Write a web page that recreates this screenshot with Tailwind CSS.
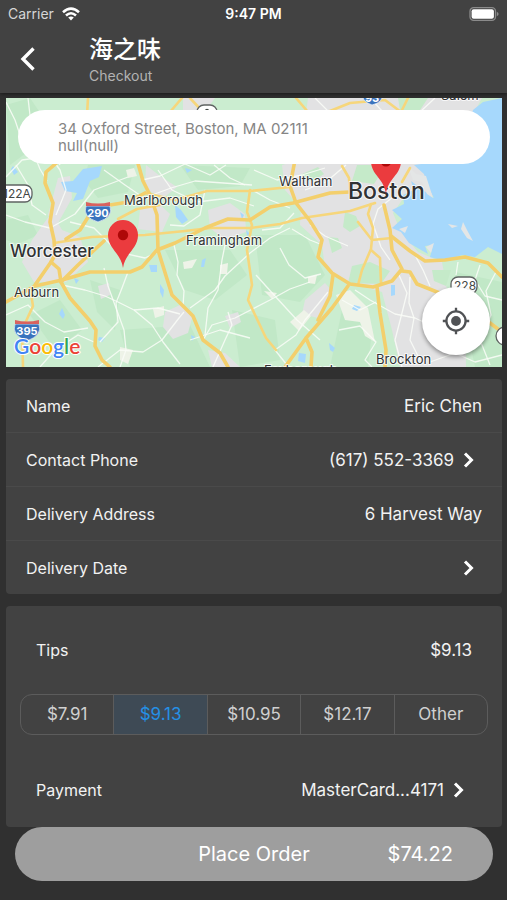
<!DOCTYPE html>
<html lang="en">
<head>
<meta charset="utf-8">
<meta name="viewport" content="width=device-width, initial-scale=1">
<title>Checkout</title>
<script src="https://cdn.jsdelivr.net/npm/@tailwindcss/browser@4"></script>
</head>
<body class="min-h-screen bg-[#303030] font-['Inter','Noto_Sans_CJK_SC',sans-serif] text-[#f2f2f2]">

<header class="bg-[#424242] shadow-[0_1px_4px_rgba(0,0,0,0.5)]">
  <div class="grid grid-cols-3 items-center px-2 pt-1 text-sm">
    <div class="flex items-center gap-2 leading-5 text-[#d6d6d6]">
      <span>Carrier</span>
      <svg class="h-[14px] w-[18px]" viewBox="0 0 18 14" fill="none" stroke="#fff" stroke-width="2.6" aria-label="Wi-Fi">
        <path d="M1 5.2Q9-2 17 5.2"/><path d="M4 8.5Q9 4 14 8.5"/><path d="M6.2 10.6Q9 8.2 11.8 10.6L9 13.6Z" fill="#fff" stroke="none"/>
      </svg>
    </div>
    <div class="text-center font-semibold leading-5 text-white">9:47 PM</div>
    <svg class="h-[14px] w-[30px] justify-self-end" viewBox="0 0 30 14" aria-label="Battery full">
      <rect x="1" y="0.7" width="25.5" height="12.6" rx="3.6" fill="none" stroke="#8b8b8b" stroke-width="1.3"/>
      <rect x="2.6" y="2.3" width="22.3" height="9.4" rx="2" fill="#fff"/>
      <path d="M27.8 4.8Q29.6 5.6 29.6 7T27.8 9.2Z" fill="#8b8b8b"/>
    </svg>
  </div>
  <div class="flex items-center gap-[49px] px-4 pt-2 pb-2">
    <button class="flex h-8 w-6 items-center justify-center" aria-label="Back">
      <svg class="h-6 w-4" viewBox="0 0 16 24" fill="none" stroke="#fff" stroke-width="3.4"><path d="M13.5 1.5L3 12L13.5 22.5"/></svg>
    </button>
    <div>
      <h1 class="pt-px text-2xl leading-[34px] font-medium text-white">海之味</h1>
      <p class="text-sm leading-[18px] text-[#b3b3b3]">Checkout</p>
    </div>
  </div>
</header>

<main class="flex flex-col gap-3 pt-[5px] pr-[5px] pl-[6px]">
  <section class="relative overflow-hidden" aria-label="Delivery map">
    <svg class="block w-full" viewBox="6 98 496 269" font-family="Inter, sans-serif">
      <rect x="6" y="98" width="496" height="269" fill="#cbedd0"/>
      <!-- woodland shading -->
      <g fill="#c1e8c7">
        <path d="M6 105L30 98L45 120L30 150L10 165Z"/><path d="M88 165L135 165L128 192L98 198L84 180Z"/><path d="M180 165L250 168L240 186L198 190Z"/>
        <path d="M165 250L230 250L247 275L215 300L185 290Z"/><path d="M90 280L120 290L115 330L97 312Z"/><path d="M120 330L190 325L210 367L130 367Z"/>
        <path d="M255 235L305 235L325 275L300 302L262 295Z"/><path d="M232 310L275 320L280 360L240 367Z"/><path d="M342 310L372 330L368 367L330 367Z"/><path d="M455 272L502 282L502 367L475 367Z"/>
        <path d="M6 220L28 215L38 235L18 244L6 240Z"/><path d="M30 315L60 300L82 330L55 350Z"/>
      </g>
      <!-- built-up areas -->
      <g fill="#e2e2e3">
        <path d="M308 98L482 98L470 120L440 165L430 178L436 197L420 190L405 196L393 213L400 230L418 252L442 262L447 290L465 312L466 367L400 367L392 330L382 292L352 284L325 268L322 245L300 225L301 208L285 190L282 165L300 160Z"/>
        <path d="M32 240L52 212L62 230L80 237L88 262L66 282L34 282L22 262Z"/><path d="M146 165L160 176L177 187L162 199L145 188Z"/>
        <path d="M140 210L158 203L170 214L162 232L138 229Z"/><path d="M165 312L182 304L192 318L188 333L173 339L163 327Z"/>
        <path d="M208 210L230 203L245 214L246 232L225 240L210 228Z"/><path d="M305 300L325 283L333 292L318 318L302 314Z"/><path d="M48 215L58 178L70 176L72 198L57 225Z"/>
        <path d="M183 98L215 98L205 112L183 111Z"/><path d="M98 286L109 283L110 295L101 299Z"/><path d="M225 316L238 312L241 322L230 328Z"/><path d="M208 350L225 353L240 367L212 367Z"/>
      </g>
      <g fill="#eef3e8">
        <path d="M336 295L350 290L368 308L375 342L365 336L360 322L345 320Z"/><path d="M290 322L304 310L311 316L299 331Z"/><path d="M120 347L133 350L128 364L120 360Z"/><path d="M126 170L134 168L137 176L128 178Z"/><path d="M153 309L164 306L164 315L155 318Z"/>
        <path d="M183 262L197 259L192 268L184 269Z"/><path d="M220 265L228 263L227 274L220 274Z"/><path d="M308 277L317 275L315 284L308 283Z"/><path d="M264 291L277 293L272 299Z"/>
      </g>
      <g fill="#c5eac9">
        <path d="M352 266L370 262L390 271L381 284L348 283Z"/><path d="M357 165L386 165L374 184L352 181Z"/><path d="M345 212L356 216L360 226L350 232L343 227Z"/>
        <path d="M328 237L338 238L342 248L332 253Z"/><path d="M398 98L428 98L420 110L400 110Z"/><path d="M300 175L318 167L324 174L312 182Z"/><path d="M432 270L451 270L446 286L434 281Z"/>
      </g>
      <!-- ocean and lakes -->
      <g fill="#a6d8fc">
        <path d="M502 98L483 102L473 110L468 130L450 160L414 165L424 174L426 183L434 198L420 188L411 181L414 190L403 195L404 204L392 210L402 219L392 228L401 232L409 243L428 254L425 246L433 245L430 257L444 261L462 255L475 257L488 247L502 254Z"/>
        <path d="M102 166L99 177L90 181L83 199L73 201L77 193L65 191L61 182L73 181L83 169Z"/><path d="M13 166L18 172L14 175L11 169Z"/>
        <path d="M175 205L181 210L188 220L182 224L176 217Z"/><path d="M202 260L206 258L204 267L201 267Z"/><path d="M149 265L157 265L157 272L151 272Z"/><path d="M160 284L164 290L163 298L160 292Z"/>
        <path d="M62 308L65 315L63 319L59 314Z"/><path d="M99 337L105 338L102 342L98 340Z"/><path d="M391 285L395 285L395 295L391 296Z"/><path d="M354 305L361 307L357 311L352 309Z"/><path d="M329 343L335 348L333 352L330 350Z"/>
        <path d="M299 353L306 354L305 363L298 361Z"/><path d="M74 278L79 280L76 284Z"/><path d="M185 168L192 170L187 173Z"/><path d="M191 335L195 337L192 341Z"/><path d="M240 212L244 215L242 219Z"/><path d="M246 230L250 234L247 236Z"/>
      </g>
      <g fill="#e4e6e6">
        <path d="M408 166L416 174L426 176L433 198L427 194L422 182L413 180Z"/><path d="M463 222L467 230L473 241L467 238L461 229Z"/><path d="M448 224L458 226L452 228Z"/><path d="M399 229L408 226L405 233Z"/><path d="M426 247L434 243L431 253Z"/>
      </g>
      <!-- local roads -->
      <g fill="none" stroke="#fafdf8" stroke-opacity="0.85" stroke-width="1.3" stroke-linejoin="round">
        <path d="M6 102L15 120L20 135L33 152L40 169L47 181"/><path d="M6 177L22 160L50 156L60 170L66 190L56 215"/><path d="M28 98L31 124L52 150L60 165"/><path d="M16 165L28 185L32 205L46 215"/>
        <path d="M6 215L25 222L50 228L75 214L94 190L128 177"/><path d="M70 222L94 228L118 252L145 258L158 252"/><path d="M104 170L125 185L144 198L171 188L195 181L252 185"/><path d="M158 170L172 190L197 202L230 198L254 206"/>
        <path d="M142 180L160 176L185 164L210 175L226 165"/><path d="M205 190L200 215L184 226L170 225"/><path d="M214 165L230 178L245 185"/>
        <path d="M62 285L85 290L105 296L118 302L134 310L152 325L163 342L180 364"/><path d="M104 268L108 286L124 330L126 350L120 367"/><path d="M128 272L122 288L116 303L118 322L100 342"/>
        <path d="M6 315L28 305L45 322L64 332L88 328"/><path d="M40 367L55 350L78 335L94 342"/><path d="M98 367L120 350L143 352L162 340L179 318L184 312"/><path d="M134 310L158 308L180 314"/>
        <path d="M174 245L178 262L177 275L184 291L183 306"/><path d="M203 340L212 325L235 318L270 300L290 289L310 282"/><path d="M190 308L215 290L225 276L250 253L270 238L290 228"/><path d="M205 335L208 308L218 290L222 260L226 240"/>
        <path d="M190 340L220 330L250 338"/><path d="M213 367L225 340L232 325L228 312"/>
        <path d="M256 275L274 295L297 320L320 340"/><path d="M287 365L275 350L296 335L305 320L328 292"/><path d="M280 248L289 265L305 278L321 274"/>
        <path d="M252 190L270 200L290 208"/><path d="M292 229L310 240L320 244"/><path d="M294 213L280 228L262 230"/>
        <path d="M254 170L277 180L302 175L325 168"/><path d="M305 190L326 182L346 165"/><path d="M310 225L325 236L348 246"/>
        <path d="M393 197L378 209L373 224L381 247L390 260"/><path d="M355 290L370 300L395 314L415 318L430 325"/>
        <path d="M399 275L407 293L402 313L395 340L402 367"/><path d="M410 277L409 303L414 318L410 340L420 360"/>
        <path d="M342 300L360 310L376 302"/><path d="M339 330L360 326L376 342L365 360L372 367"/><path d="M416 257L423 270L430 286"/><path d="M458 262L456 275"/>
        <path d="M480 265L475 280L485 296L502 300"/><path d="M496 272L486 291L491 315L480 340L490 365"/><path d="M430 362L455 353L475 362L502 355"/><path d="M315 98L329 112"/><path d="M370 98L383 112"/><path d="M420 112L435 98"/>
      </g>
      <!-- highways -->
      <g fill="none" stroke-linejoin="round" stroke-linecap="round">
        <g stroke="#f6d67b" stroke-width="2.6">
          <path d="M54 243L92 237L145 235L185 231L210 228L250 228L280 224L302 218L350 211L375 203"/><path d="M30 288L33 306L22 330L23 367"/><path d="M145 193L175 200L207 191L250 191L290 187"/>
          <path d="M118 219L137 209L160 205"/><path d="M88 98L87 115M182 98L170 112M190 98L203 112M296 98L308 112M330 111L350 103L385 100L401 112L408 98"/>
          <path d="M371 204L368 214L373 228L371 249L362 270L358 285M371 250L380 258L381 284M358 222L372 240L392 238"/><path d="M250 190L247 212L252 225L247 250L252 285L248 300L266 338L276 350"/><path d="M402 182L410 168M342 166L349 178L350 193"/>
        </g>
        <g stroke="#f3cf6c" stroke-width="3.6">
          <path d="M60 160L46 172L45 183L53 203L50 222L54 240L55 255L51 262L35 285"/><path d="M51 262L59 269L61 282L70 298L90 321L96 330L95 346L102 360L110 367"/>
          <path d="M6 302L35 286L62 280L90 272L130 272L142 267L157 250L175 243L205 228L228 219L250 220L270 207L293 203L330 193L350 192"/>
          <path d="M61 282L78 265L104 241M66 239L80 230L90 214L110 205L128 202L145 193"/><path d="M137 160L143 181L150 195L157 215L158 250L172 295L193 316L203 340L220 353L228 367"/>
          <path d="M295 160L290 186L296 203L310 221L322 240L318 257L332 273L350 284L373 287L392 281L402 269L392 250L390 230L384 205"/>
          <path d="M348 286L332 308L306 338L285 367M306 338L312 352L311 367"/><path d="M333 275L330 296L318 320"/><path d="M377 287L380 313L386 350L385 367"/>
          <path d="M402 271L410 272L417 284L437 292L467 305L490 323L502 332"/><path d="M391 236L410 251L425 261L445 260L465 257L488 263L502 277"/>
        </g>
      </g>
      <!-- route shields -->
      <g stroke="#5f6362" stroke-width="1.3" fill="#fff">
        <rect x="-5" y="185" width="37" height="17" rx="7"/><rect x="197" y="105" width="20" height="16" rx="7"/><rect x="451" y="277" width="26" height="17" rx="7"/><circle cx="505" cy="336" r="9"/>
      </g>
      <g fill="#434846" font-size="12"><text x="3" y="198">122A</text><text x="454" y="290">228</text></g>
      <path d="M205 111Q207 108 209 111" fill="none" stroke="#434846" stroke-width="1.4"/>
      <g fill="#3973bd" stroke="#f1f4fa" stroke-width="0.7">
        <path d="M86 206H110Q114 217 98 222Q82 217 86 206Z"/><path d="M15 324H39Q43 335 27 341Q11 335 15 324Z"/><path d="M363 94H382Q384 102 372 105Q361 101 363 94Z"/>
      </g>
      <g fill="#d9625f"><path d="M86 202Q98 205 110 202L110 206H86Z"/><path d="M15 320Q27 323 39 320L39 324H15Z"/></g>
      <g fill="#fff" font-size="11" font-weight="700" text-anchor="middle"><text x="98" y="217">290</text><text x="27" y="335">395</text><text x="372" y="102">93</text></g>
      <!-- place names -->
      <g fill="#303234" stroke="#fff" stroke-width="2" stroke-opacity="0.75" paint-order="stroke" stroke-linejoin="round" font-size="13">
        <text x="124" y="205">Marlborough</text><text x="186" y="245">Framingham</text><text x="279" y="186">Waltham</text><text x="14" y="297">Auburn</text><text x="376" y="364">Brockton</text><text x="441" y="100">Salem</text><text x="264" y="375">Foxborough</text>
        <text x="10" y="257" font-size="17" font-weight="500">Worcester</text><text x="348" y="199" font-size="23" font-weight="500">Boston</text>
      </g>
      <!-- location pins -->
      <g><path d="M123 268C121 253 108 249 108 235A15 15 0 0 1 138 235C138 249 125 253 123 268Z" fill="#eb3b3e"/><circle cx="123" cy="235" r="5.2" fill="#ae0808"/>
      <path d="M386 194C384 178 371 175 371 161A15 15 0 0 1 401 161C401 175 388 178 386 194Z" fill="#eb3b3e"/><circle cx="386" cy="161" r="5.5" fill="#ae0808"/></g>
      <text x="14" y="354" font-family="Lato, sans-serif" font-size="21" font-weight="600" stroke="#fff" stroke-width="2" paint-order="stroke"><tspan fill="#4285f4">G</tspan><tspan fill="#ea4335">o</tspan><tspan fill="#fbbc05">o</tspan><tspan fill="#4285f4">g</tspan><tspan fill="#34a853">l</tspan><tspan fill="#ea4335">e</tspan></text>
    </svg>
    <button class="absolute inset-x-3 top-3 rounded-full bg-white py-[10px] pr-10 pl-10 text-left text-[15px] leading-[17px] text-[#858585]">34 Oxford Street, Boston, MA 02111<br>null(null)</button>
    <button class="absolute right-3 bottom-3 flex size-[68px] items-center justify-center rounded-full bg-white shadow-[0_2px_4px_rgba(0,0,0,0.4)]" aria-label="Show my location">
      <svg class="size-7" viewBox="0 0 28 28" fill="none" stroke="#505255" stroke-width="2.3"><circle cx="14" cy="14" r="9.6"/><circle cx="14" cy="14" r="4.9" fill="#505255" stroke="none"/><path d="M14 .8V4.5M14 23.5V27.2M.8 14H4.5M23.5 14H27.2"/></svg>
    </button>
  </section>

  <section class="divide-y divide-[#4a4a4a] rounded bg-[#424242]" aria-label="Delivery details">
    <div class="flex h-[54px] items-center justify-between px-5"><span class="text-base">Name</span><span class="text-[17px] leading-7">Eric Chen</span></div>
    <button class="flex h-[54px] w-full items-center justify-between pr-7 pl-5"><span class="text-base">Contact Phone</span><span class="flex items-center gap-2 text-[17px] leading-7">(617) 552-3369
      <svg class="h-4 w-3" viewBox="0 0 12 16" fill="none" stroke="#fff" stroke-width="3"><path d="M3 1.5L9.5 8L3 14.5"/></svg></span></button>
    <div class="flex h-[54px] items-center justify-between px-5"><span class="text-base">Delivery Address</span><span class="text-[17px] leading-7">6 Harvest Way</span></div>
    <button class="flex h-[53px] w-full items-center justify-between pr-7 pl-5"><span class="text-base">Delivery Date</span>
      <svg class="h-4 w-3" viewBox="0 0 12 16" fill="none" stroke="#fff" stroke-width="3"><path d="M3 1.5L9.5 8L3 14.5"/></svg></button>
  </section>

  <div>
    <section class="rounded bg-[#424242] px-[14px] pt-4" aria-label="Tips and payment">
      <div class="flex h-14 items-center justify-between px-4"><h2 id="tips" class="text-base">Tips</h2><span class="text-[17px] leading-7">$9.13</span></div>
      <div role="radiogroup" aria-labelledby="tips" class="mt-4 flex h-[41px] divide-x divide-[#5c5c5c] overflow-hidden rounded-xl border border-[#5c5c5c] text-[17px] text-[#d0d0d0]">
        <label class="flex flex-1 items-center justify-center has-[:checked]:bg-[#3e4a55] has-[:checked]:text-[#2590e6]"><input class="sr-only" type="radio" name="tip">$7.91</label>
        <label class="flex flex-1 items-center justify-center has-[:checked]:bg-[#3e4a55] has-[:checked]:text-[#2590e6]"><input class="sr-only" type="radio" name="tip" checked>$9.13</label>
        <label class="flex flex-1 items-center justify-center has-[:checked]:bg-[#3e4a55] has-[:checked]:text-[#2590e6]"><input class="sr-only" type="radio" name="tip">$10.95</label>
        <label class="flex flex-1 items-center justify-center has-[:checked]:bg-[#3e4a55] has-[:checked]:text-[#2590e6]"><input class="sr-only" type="radio" name="tip">$12.17</label>
        <label class="flex flex-1 items-center justify-center has-[:checked]:bg-[#3e4a55] has-[:checked]:text-[#2590e6]"><input class="sr-only" type="radio" name="tip">Other</label>
      </div>
      <button class="mt-[18px] flex h-[74px] w-full items-center justify-between pr-6 pl-4"><span class="text-base">Payment</span><span class="flex items-center gap-2 text-[17px] leading-7">MasterCard...4171
        <svg class="h-4 w-3" viewBox="0 0 12 16" fill="none" stroke="#fff" stroke-width="3"><path d="M3 1.5L9.5 8L3 14.5"/></svg></span></button>
    </section>
    <button class="mx-[9px] grid h-[54px] w-[calc(100%-18px)] grid-cols-[1fr_auto_1fr] items-center rounded-full bg-[#9e9e9e] text-xl text-white"><span class="col-start-2">Place Order</span><span class="pr-10 text-right">$74.22</span></button>
  </div>
</main>
</body>
</html>
